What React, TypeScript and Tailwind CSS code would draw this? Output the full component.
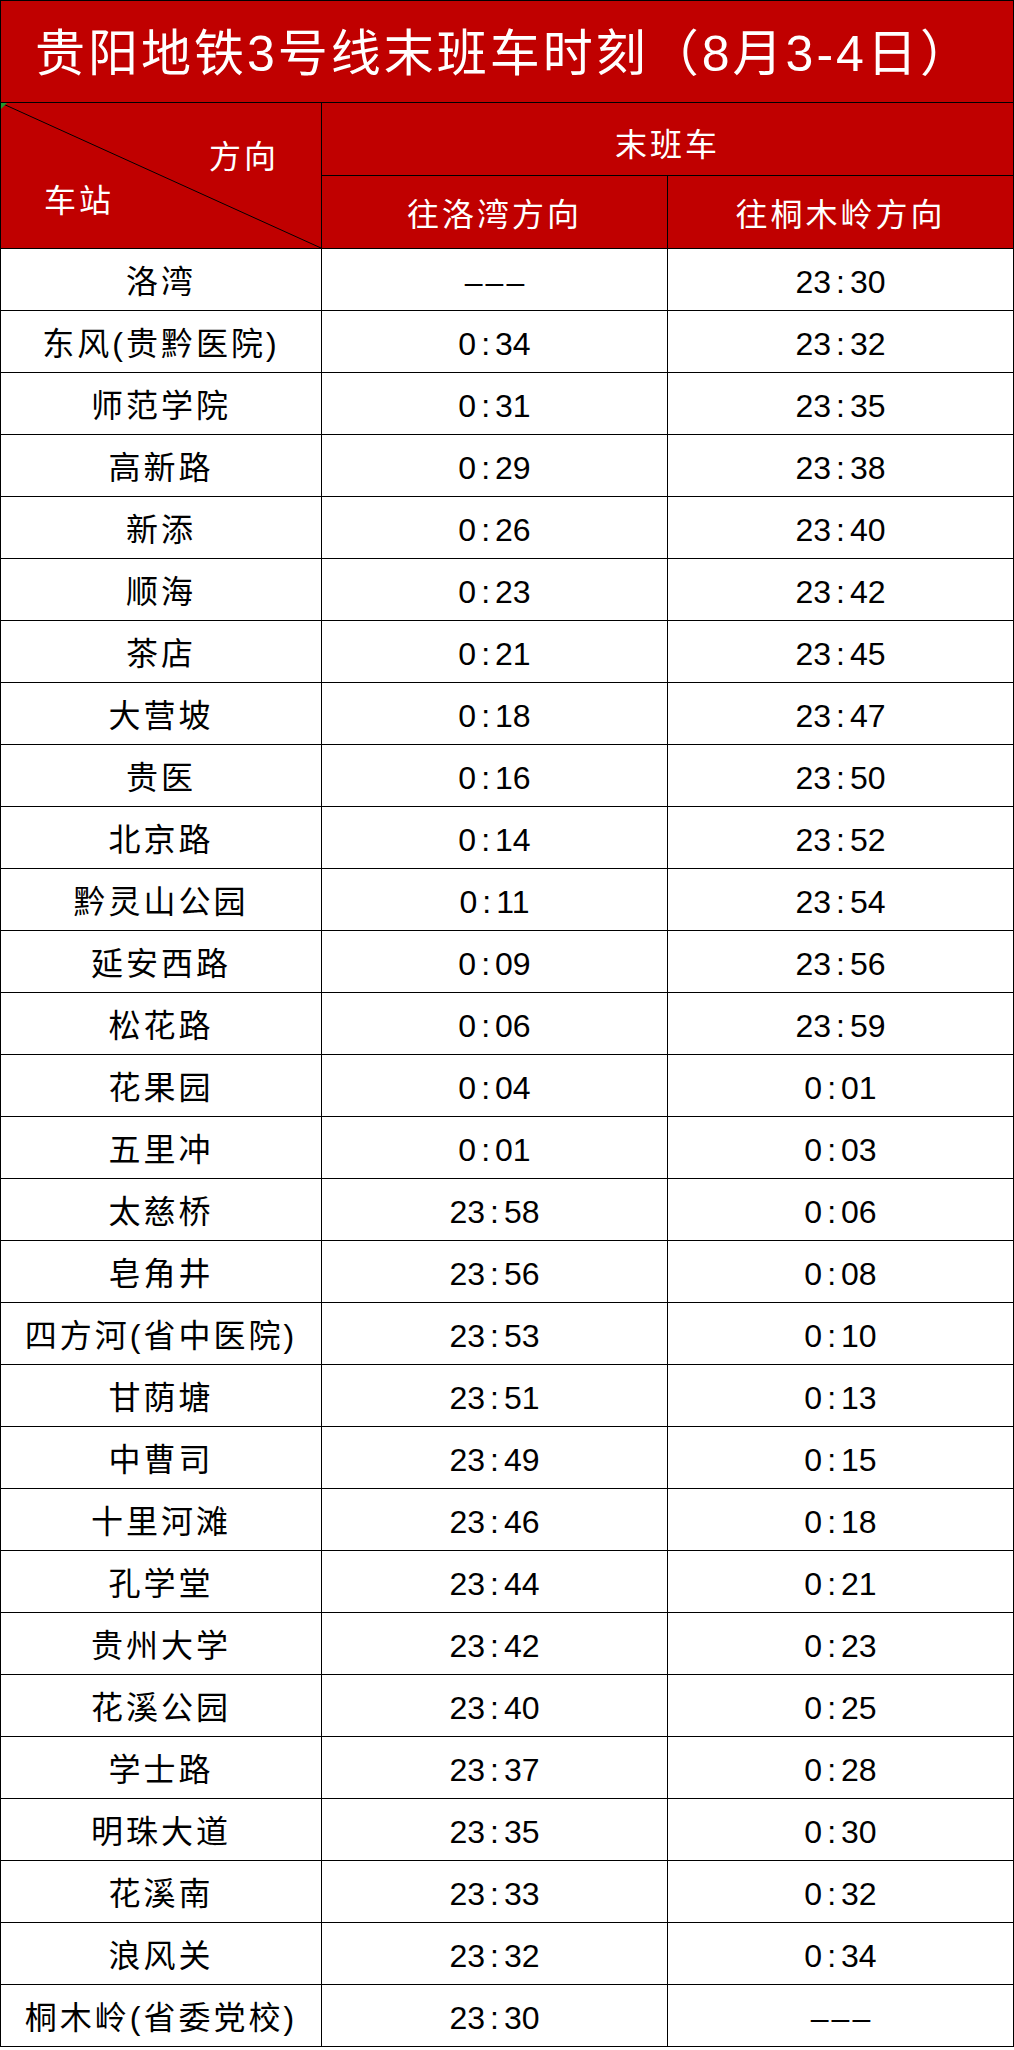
const rows: [string, string, string][] = [
  ['洛湾', '---', '23:30'],
  ['东风(贵黔医院)', '0:34', '23:32'],
  ['师范学院', '0:31', '23:35'],
  ['高新路', '0:29', '23:38'],
  ['新添', '0:26', '23:40'],
  ['顺海', '0:23', '23:42'],
  ['茶店', '0:21', '23:45'],
  ['大营坡', '0:18', '23:47'],
  ['贵医', '0:16', '23:50'],
  ['北京路', '0:14', '23:52'],
  ['黔灵山公园', '0:11', '23:54'],
  ['延安西路', '0:09', '23:56'],
  ['松花路', '0:06', '23:59'],
  ['花果园', '0:04', '0:01'],
  ['五里冲', '0:01', '0:03'],
  ['太慈桥', '23:58', '0:06'],
  ['皂角井', '23:56', '0:08'],
  ['四方河(省中医院)', '23:53', '0:10'],
  ['甘荫塘', '23:51', '0:13'],
  ['中曹司', '23:49', '0:15'],
  ['十里河滩', '23:46', '0:18'],
  ['孔学堂', '23:44', '0:21'],
  ['贵州大学', '23:42', '0:23'],
  ['花溪公园', '23:40', '0:25'],
  ['学士路', '23:37', '0:28'],
  ['明珠大道', '23:35', '0:30'],
  ['花溪南', '23:33', '0:32'],
  ['浪风关', '23:32', '0:34'],
  ['桐木岭(省委党校)', '23:30', '---'],
];

function Time({ value }: { value: string }) {
  if (value === '---') return <span className="pl-[3px] tracking-[3px]">–––</span>;
  const [h, m] = value.split(':');
  return (
    <span>
      {h}
      <span className="mx-[5px]">:</span>
      {m}
    </span>
  );
}

export default function App() {
  return (
    <div
      className="w-[1014px] bg-white text-black"
      style={{ fontFamily: '"Liberation Sans", "Noto Sans CJK SC", sans-serif' }}
    >
      <div className="border-l border-t border-black">
        {/* title */}
        <div className="flex h-[102px] items-center border-b border-r border-black bg-[#c00000] pl-[34px] pt-[6px] text-[50px] tracking-[3px] text-white">
          贵阳地铁3号线末班车时刻（8月3-4日）
        </div>

        {/* header */}
        <div className="grid grid-cols-[321px_346px_346px] grid-rows-[73px_73px] bg-[#c00000] text-[32px] tracking-[3px] text-white">
          <div className="relative row-span-2 border-b border-r border-black">
            <svg className="absolute inset-0 h-full w-full" viewBox="0 0 320 145" preserveAspectRatio="none">
              <line x1="0" y1="0" x2="320" y2="145" stroke="#000" strokeWidth="1" />
            </svg>
            <span className="absolute left-0 top-0 h-0 w-0 border-l-[6px] border-b-[6px] border-l-[#1f9a2e] border-b-transparent" />
            <div className="relative flex h-full flex-col pt-[34px]">
              <div className="pr-[42px] text-right leading-[40px]">方向</div>
              <div className="mt-[4px] pl-[43px] leading-[40px]">车站</div>
            </div>
          </div>
          <div className="col-span-2 flex items-center justify-center border-b border-r border-black pt-[12px]">
            末班车
          </div>
          <div className="flex items-center justify-center border-b border-r border-black pt-[6px]">
            往洛湾方向
          </div>
          <div className="flex items-center justify-center border-b border-r border-black pt-[6px]">
            往桐木岭方向
          </div>
        </div>

        {/* body */}
        <div className="grid grid-cols-[321px_346px_346px] text-[32px]">
          {rows.map(([name, a, b]) => (
            <div key={name} className="contents">
              <div className="flex h-[62px] items-center justify-center border-b border-r border-black pt-[4px] tracking-[3px]">
                {name}
              </div>
              <div className="flex h-[62px] items-center justify-center border-b border-r border-black pt-[4px]">
                <Time value={a} />
              </div>
              <div className="flex h-[62px] items-center justify-center border-b border-r border-black pt-[4px]">
                <Time value={b} />
              </div>
            </div>
          ))}
        </div>
      </div>
    </div>
  );
}
